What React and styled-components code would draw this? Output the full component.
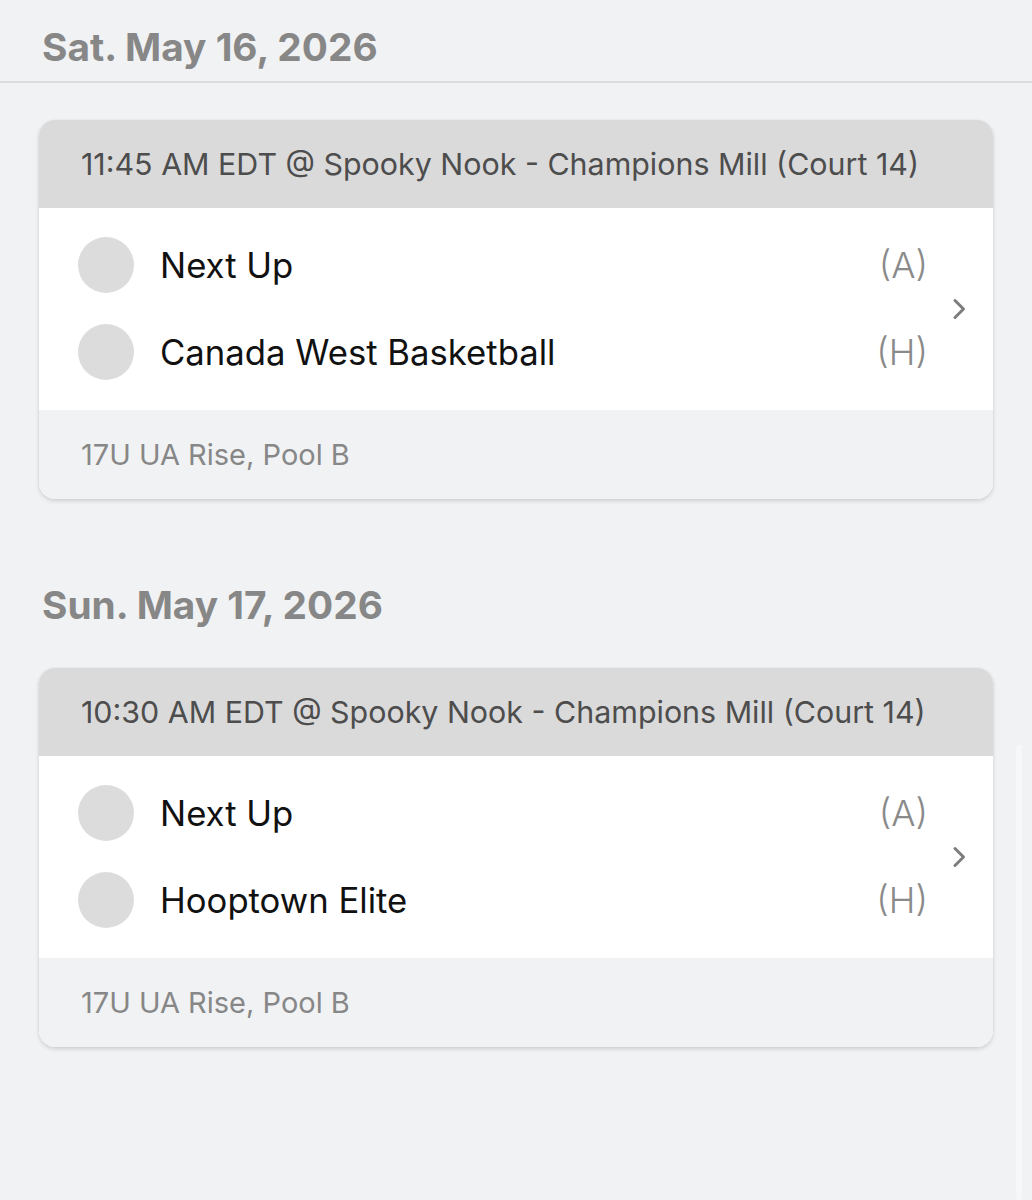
import React from "react";
import styled, { createGlobalStyle } from "styled-components";

const Global = createGlobalStyle`
  html, body { margin: 0; padding: 0; background: #f1f2f4; }
  body { font-family: Inter, "Noto Sans", sans-serif; -webkit-font-smoothing: antialiased; }
  #root { min-height: 1200px; background: #f1f2f4; }
`;

const Page = styled.div`
  position: relative;
  width: 1032px;
  min-height: 1200px;
  background: #f1f2f4;
`;

const Section = styled.section`
  display: flex;
  flex-direction: column;
`;

const DateHeading = styled.h2`
  margin: 0;
  padding: ${(p) => (p.$divider ? "24px 42px 11px" : "83px 42px 40px")};
  font-size: 38.8px;
  line-height: 46px;
  font-weight: 700;
  color: #878787;
  letter-spacing: 0;
  border-bottom: ${(p) => (p.$divider ? "2px solid #dcdcdc" : "none")};
`;

const CardWrap = styled.div`
  padding: ${(p) => (p.$first ? "37px 39px 0 39px" : "0 39px")};
`;

const Card = styled.article`
  border-radius: 16px;
  overflow: hidden;
  background: #ffffff;
  box-shadow: 0 2px 4px rgba(0, 0, 0, 0.14), 0 0 1px rgba(0, 0, 0, 0.12);
`;

const CardHeader = styled.header`
  height: 88px;
  display: flex;
  align-items: center;
  padding: 0 42px;
  background: #dadada;
  color: #4d4d4d;
  font-size: 30.4px;
  font-weight: 400;
`;

const CardBody = styled.div`
  display: flex;
  align-items: center;
  padding: 29px 0 30px 39px;
  background: #fff;
`;

const Teams = styled.div`
  flex: 1;
  display: flex;
  flex-direction: column;
  gap: 31px;
`;

const TeamRow = styled.div`
  display: flex;
  align-items: center;
  height: 56px;
`;

const Avatar = styled.span`
  width: 56px;
  height: 56px;
  border-radius: 50%;
  background: #dcdcdc;
  flex-shrink: 0;
`;

const TeamName = styled.span`
  flex: 1;
  margin-left: 26px;
  font-size: 34.7px;
  color: #111;
`;

const Side = styled.span`
  font-size: 36px;
  font-weight: 300;
  color: #8a8a8a;
  margin-right: -5px;
`;

const Chevron = styled.div`
  width: 68px;
  display: flex;
  justify-content: center;
  padding-left: 2px;
  color: #7d7d7d;
`;

const CardFooter = styled.footer`
  height: 89px;
  display: flex;
  align-items: center;
  padding: 0 42px;
  background: #f1f2f4;
  color: #878787;
  font-size: 29px;
`;

const ScrollTrack = styled.div`
  position: absolute;
  right: 10px;
  top: 745px;
  bottom: 0;
  width: 6px;
  border-radius: 3px;
  background: #f6f7f9;
`;

const games = [
  {
    date: "Sat. May 16, 2026",
    time: "11:45 AM EDT @ Spooky Nook - Champions Mill (Court 14)",
    away: "Next Up",
    home: "Canada West Basketball",
    pool: "17U UA Rise, Pool B",
  },
  {
    date: "Sun. May 17, 2026",
    time: "10:30 AM EDT @ Spooky Nook - Champions Mill (Court 14)",
    away: "Next Up",
    home: "Hooptown Elite",
    pool: "17U UA Rise, Pool B",
  },
];

function GameCard({ g }) {
  return (
    <Card>
      <CardHeader>{g.time}</CardHeader>
      <CardBody>
        <Teams>
          <TeamRow>
            <Avatar />
            <TeamName>{g.away}</TeamName>
            <Side>(A)</Side>
          </TeamRow>
          <TeamRow>
            <Avatar />
            <TeamName>{g.home}</TeamName>
            <Side>(H)</Side>
          </TeamRow>
        </Teams>
        <Chevron>
          <svg width="16" height="24" viewBox="0 0 16 24" fill="none">
            <path d="M4 3.5l8.5 8.5-8.5 8.5" stroke="currentColor" strokeWidth="3" strokeLinecap="round" strokeLinejoin="round" />
          </svg>
        </Chevron>
      </CardBody>
      <CardFooter>{g.pool}</CardFooter>
    </Card>
  );
}

export default function App() {
  return (
    <Page>
      <Global />
      {games.map((g, i) => (
        <Section key={i}>
          <DateHeading $divider={i === 0}>{g.date}</DateHeading>
          <CardWrap $first={i === 0}>
            <GameCard g={g} />
          </CardWrap>
        </Section>
      ))}
      <ScrollTrack />
    </Page>
  );
}
